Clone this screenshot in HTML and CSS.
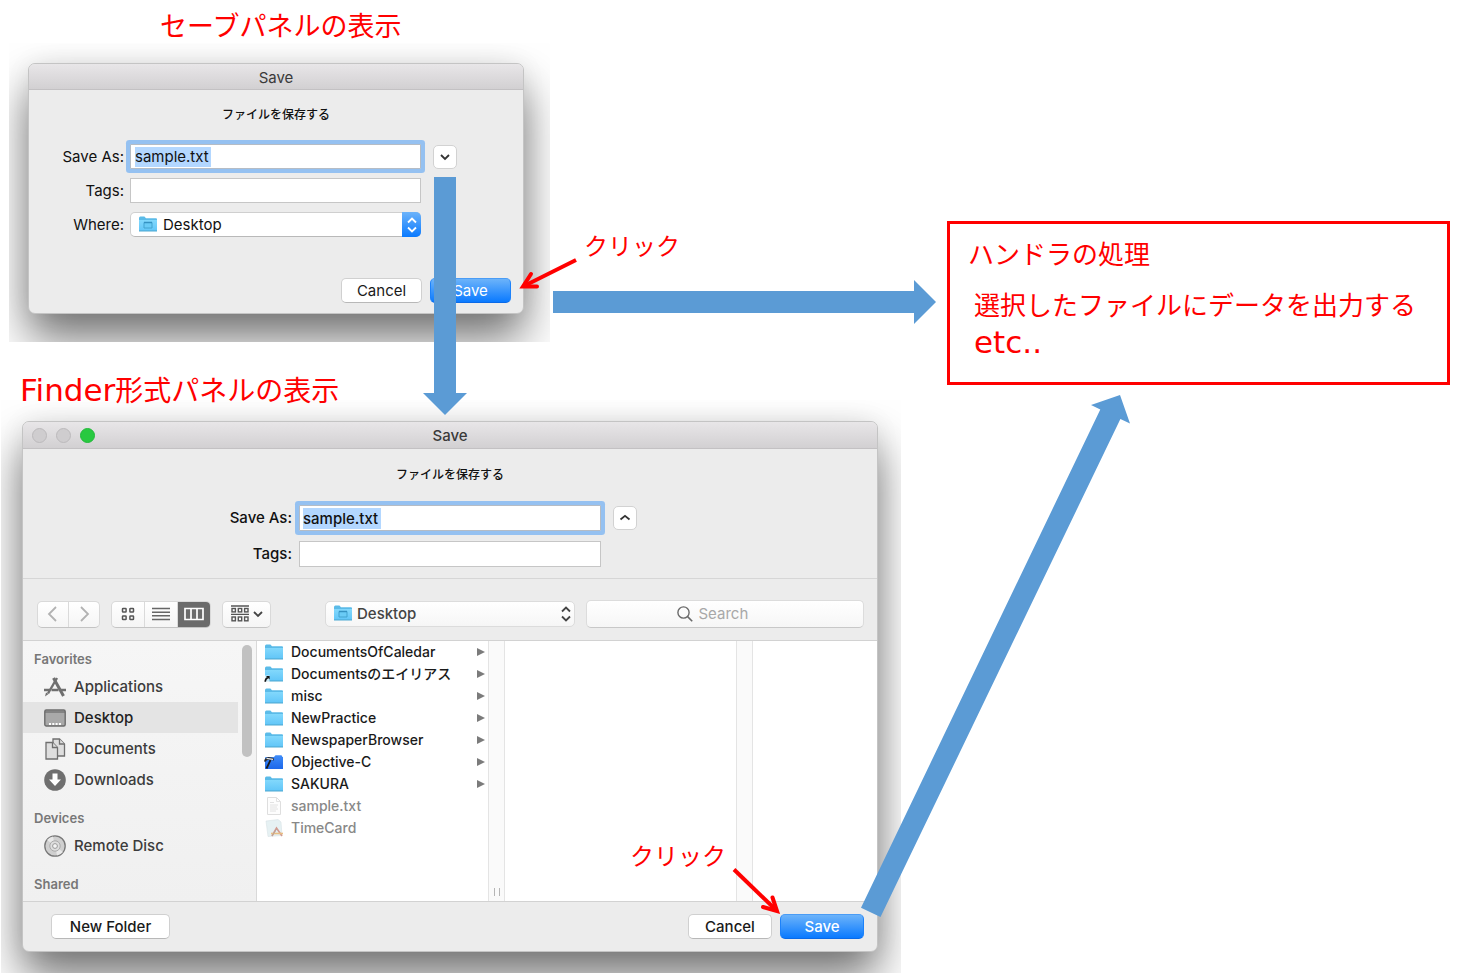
FILE: index.html
```html
<!DOCTYPE html>
<html lang="ja">
<head>
<meta charset="utf-8">
<title>セーブパネルの表示</title>
<link rel="stylesheet" href="styles.css">
</head>
<body>
<svg class="defs" aria-hidden="true">
  <defs>
    <linearGradient id="folderFill" x1="0" y1="0" x2="0" y2="1"><stop offset="0" stop-color="#82d8fc"/><stop offset="1" stop-color="#62c6f8"/></linearGradient>
    <linearGradient id="projFill" x1="0" y1="0" x2="0" y2="1"><stop offset="0" stop-color="#3f8cf8"/><stop offset="1" stop-color="#1d68ea"/></linearGradient>
    <symbol id="folder" viewBox="0 0 20 18"><path d="M1 3.2Q1 1.6 2.4 1.6H6.4L8 3.2H18Q19 3.2 19 4.4V16H1Z" fill="#5bbbe8"/><path d="M1 5H19V15.6H1Z" fill="url(#folderFill)"/><path d="M1 16H19" stroke="#4fa9d2" stroke-width="1"/></symbol>
    <symbol id="desk-folder" viewBox="0 0 20 18"><use href="#folder"/><path d="M6 7.500H14V13H6Z" fill="#6acbf6" stroke="#42a3d0"/><path d="M6 7.500H14" stroke="#3592c2" stroke-width="1.500"/></symbol>
    <symbol id="alias-folder" viewBox="0 0 20 18"><use href="#folder"/><path d="M0 10.500H5.500V17H0Z" fill="#fff" opacity=".7"/><path d="M1.200 16.800Q1.200 14 3.800 12.500" stroke="#111" stroke-width="1.600" fill="none"/><path d="M2 11H5.600V14.600Z" fill="#111"/></symbol>
    <symbol id="project" viewBox="0 0 20 18"><path d="M1 5Q1 4 2 4H10L11.500 2.200H17.500L18.500 4H19V16H1Z" fill="url(#projFill)"/><path d="M2.500 15.500L6.500 7" stroke="#1c1c1c" stroke-width="1.800"/><path d="M0 8.500Q.5 4.500 4.500 4L9.500 5L10 7.500L6.500 6.800Q2.500 6.300 1.500 8.800Z" fill="#2c2c2c"/><path d="M2.500 5.400L9 6.300" stroke="#e4e8ee" stroke-width="1.200"/></symbol>
    <symbol id="textfile" viewBox="0 0 20 18"><path d="M3.500.5H12.500L16.500 4.500V17.500H3.500Z" fill="#fdfdfd" stroke="#dedede"/><path d="M12.500.5V4.500H16.500M6 5.500H10M6 8H14M6 10H13M6 12H14M6 14H12" fill="none" stroke="#e2e2e2"/></symbol>
    <symbol id="appfile" viewBox="0 0 20 18"><path d="M2 2L14 .5L17 3L18 16.500L4 17.500Z" fill="#e6f1f3" stroke="#d9e3e5" stroke-width=".6"/><path d="M8 17L12.500 9L18 17" fill="none" stroke="#d39a90" stroke-width="1.600"/><path d="M7 14.500H19" stroke="#e8bd83" stroke-width="1.600"/><path d="M12.500 10L8 17" stroke="#b8a59b"/></symbol>
    <symbol id="updown" viewBox="0 0 12 18"><path d="M2 6.500L6 2.500L10 6.500M2 11.500L6 15.500L10 11.500" fill="none" stroke="currentColor" stroke-width="1.800"/></symbol>
    <symbol id="down" viewBox="0 0 12 12"><path d="M2 4L6 8L10 4" fill="none" stroke="currentColor" stroke-width="1.800"/></symbol>
    <symbol id="up" viewBox="0 0 12 12"><path d="M1.500 7.500L6 3.800L10.500 7.500" fill="none" stroke="currentColor" stroke-width="1.800"/></symbol>
  </defs>
</svg>

<main class="canvas">
  <h1 class="caption caption-sheet">セーブパネルの表示</h1>

  <section class="shot shot-sheet">
    <form class="window">
      <header class="titlebar">Save</header>
      <p class="message">ファイルを保存する</p>
      <div class="fields fields-sheet">
        <label for="name1">Save As:</label>
        <div class="field focused"><input id="name1" type="text" value="sample.txt"></div>
        <button class="toggle" type="button" aria-label="Expand"><svg><use href="#down"/></svg></button>
        <label for="tags1">Tags:</label>
        <div class="field"><input id="tags1" class="wide" type="text"></div>
        <span></span>
        <label for="where1">Where:</label>
        <div class="popup popup-blue">
          <select id="where1"><option>Desktop</option></select>
          <svg class="popup-icon"><use href="#desk-folder"/></svg>
          <span class="popup-cap"><svg><use href="#updown"/></svg></span>
        </div>
      </div>
      <footer class="sheet-actions">
        <button class="btn" type="button">Cancel</button>
        <button class="btn primary" type="button">Save</button>
      </footer>
    </form>
  </section>

  <h2 class="caption caption-finder"><span class="latin">Finder</span>形式パネルの表示</h2>

  <section class="shot shot-finder">
    <form class="window">
      <header class="titlebar"><span class="lights"><i></i><i></i><i class="green"></i></span>Save</header>
      <p class="message">ファイルを保存する</p>
      <div class="fields fields-finder">
        <label for="name2">Save As:</label>
        <div class="field focused"><input id="name2" type="text" value="sample.txt"></div>
        <button class="toggle" type="button" aria-label="Collapse"><svg><use href="#up"/></svg></button>
        <label for="tags2">Tags:</label>
        <div class="field"><input id="tags2" class="wide" type="text"></div>
      </div>

      <div class="toolbar">
        <div class="segments nav">
          <button type="button" aria-label="Back"><svg viewBox="0 0 16 16"><path d="M11 1L4 8L11 15" fill="none" stroke="#b2b2b2" stroke-width="1.800"/></svg></button>
          <button type="button" aria-label="Forward"><svg viewBox="0 0 16 16"><path d="M5 1L12 8L5 15" fill="none" stroke="#b2b2b2" stroke-width="1.800"/></svg></button>
        </div>
        <div class="segments views">
          <button type="button" aria-label="Icons"><svg viewBox="0 0 16 16"><g fill="none" stroke="#555" stroke-width="1.500"><rect x="2.500" y="2.500" width="3.600" height="3.600" rx=".6"/><rect x="9.900" y="2.500" width="3.600" height="3.600" rx=".6"/><rect x="2.500" y="9.900" width="3.600" height="3.600" rx=".6"/><rect x="9.900" y="9.900" width="3.600" height="3.600" rx=".6"/></g></svg></button>
          <button type="button" aria-label="List"><svg class="w18" viewBox="0 0 18 16"><path d="M0 2.500H18M0 6.200H18M0 9.800H18M0 13.500H18" stroke="#666" stroke-width="1.400"/></svg></button>
          <button type="button" class="on" aria-label="Columns"><svg class="w20" viewBox="0 0 20 16"><path d="M1 2.500H19V13.500H1ZM7 2.500V13.500M13 2.500V13.500" fill="none" stroke="#fff" stroke-width="1.700"/></svg></button>
        </div>
        <div class="segments group">
          <button type="button" aria-label="Arrange"><svg class="w20" viewBox="0 0 20 18"><path d="M1 1H19M1 9.300H19" stroke="#555" stroke-width="1.300"/><g fill="none" stroke="#555" stroke-width="1.400"><rect x="2" y="3.500" width="3.400" height="3.400"/><rect x="8.300" y="3.500" width="3.400" height="3.400"/><rect x="14.600" y="3.500" width="3.400" height="3.400"/><rect x="2" y="12" width="3.400" height="3.800"/><rect x="8.300" y="12" width="3.400" height="3.800"/><rect x="14.600" y="12" width="3.400" height="3.800"/></g></svg><svg class="w12"><use href="#down"/></svg></button>
        </div>
        <div class="popup popup-plain">
          <select aria-label="Location"><option>Desktop</option></select>
          <svg class="popup-icon"><use href="#desk-folder"/></svg>
          <span class="popup-cap"><svg><use href="#updown"/></svg></span>
        </div>
        <label class="search">
          <svg viewBox="0 0 16 16"><circle cx="6.500" cy="6.500" r="5.600" fill="none" stroke="#6a6a6a" stroke-width="1.400"/><path d="M10.600 10.600L15.200 15.200" stroke="#6a6a6a" stroke-width="1.600"/></svg>
          <input type="search" placeholder="Search" aria-label="Search">
        </label>
      </div>

      <div class="browser">
        <nav class="sidebar">
          <h3>Favorites</h3>
          <a href="#"><svg viewBox="0 0 22 22"><g fill="none" stroke="#6f6f6f"><path d="M13 2L4 17.500" stroke-width="2.400"/><path d="M9.500 2L19.500 20" stroke-width="3"/><path d="M0 14H22" stroke-width="2.600" stroke-dasharray="6 1.500 7 1.500 6"/></g><path d="M1 20.500L2 16.500L4.500 18Z" fill="#6f6f6f"/></svg>Applications</a>
          <a href="#" class="current"><svg viewBox="0 0 22 22"><rect x=".8" y="3" width="20.400" height="16" rx="1.500" fill="#a9a9a9" stroke="#6c6c6c" stroke-width="1.400"/><path d="M1 5H21" stroke="#6c6c6c" stroke-width="1.200"/><path d="M5 17H17" stroke="#fff" stroke-width="2" stroke-dasharray="2 1.300"/></svg>Desktop</a>
          <a href="#"><svg viewBox="0 0 22 22"><g fill="#dedede" stroke="#6f6f6f" stroke-width="1.300"><path d="M9 1H15.500L20.500 6V18H9Z"/><path d="M15.500 1V6H20.500"/><path d="M2 4.500H8.500L13.500 9.500V21H2Z"/><path d="M8.500 4.500V9.500H13.500"/></g></svg>Documents</a>
          <a href="#"><svg viewBox="0 0 22 22"><circle cx="11" cy="11" r="10.800" fill="#6f6f6f"/><path d="M8.500 4.500H13.500V10.500H17L11 17L5 10.500H8.500Z" fill="#fff"/></svg>Downloads</a>
          <h3>Devices</h3>
          <a href="#"><svg viewBox="0 0 22 22"><circle cx="11" cy="11" r="10.200" fill="#cfcfcf" stroke="#777" stroke-width="1.300"/><path d="M11 11L3 5A10 10 0 0 1 9 1.500ZM11 11L19 17A10 10 0 0 1 13 20.500Z" fill="#e8e8e8"/><circle cx="11" cy="11" r="5.200" fill="#dedede" stroke="#aaa"/><circle cx="11" cy="11" r="2.400" fill="#f5f5f5" stroke="#999"/></svg>Remote Disc</a>
          <h3>Shared</h3>
          <span class="scrollbar"></span>
        </nav>
        <ul class="files">
          <li class="dir"><svg><use href="#folder"/></svg>DocumentsOfCaledar</li>
          <li class="dir"><svg><use href="#alias-folder"/></svg>Documentsのエイリアス</li>
          <li class="dir"><svg><use href="#folder"/></svg>misc</li>
          <li class="dir"><svg><use href="#folder"/></svg>NewPractice</li>
          <li class="dir"><svg><use href="#folder"/></svg>NewspaperBrowser</li>
          <li class="dir"><svg><use href="#project"/></svg>Objective-C</li>
          <li class="dir"><svg><use href="#folder"/></svg>SAKURA</li>
          <li class="dim"><svg><use href="#textfile"/></svg>sample.txt</li>
          <li class="dim"><svg><use href="#appfile"/></svg>TimeCard</li>
        </ul>
        <div class="gutter grip"></div>
        <div class="column"></div>
        <div class="gutter"></div>
        <div></div>
      </div>

      <footer class="finder-actions">
        <button class="btn new-folder" type="button">New Folder</button>
        <button class="btn" type="button">Cancel</button>
        <button class="btn primary" type="button">Save</button>
      </footer>
    </form>
  </section>

  <section class="handler">
    <h2>ハンドラの処理</h2>
    <p>選択したファイルにデータを出力する<br><span class="latin">etc..</span></p>
  </section>

  <p class="click click-sheet">クリック</p>
  <p class="click click-finder">クリック</p>

  <svg class="arrows" viewBox="0 0 1464 973" aria-hidden="true">
    <g fill="#5b9bd5">
      <path d="M434 177H456V393H467L445 415L423 393H434Z"/>
      <path d="M553 291H914V280L936 302L914 324V313H553Z"/>
      <path d="M861 907.700L1100.300 409.500L1091 405L1120 395L1130 423.500L1120.400 419L880.500 917Z"/>
    </g>
    <g fill="none" stroke="#f00" stroke-width="4">
      <path d="M576 260L524 286"/><path d="M531 274L523 286.500L537 286.500" stroke-linecap="round"/>
      <path d="M734 869.500L776 910"/><path d="M772.500 897.500L777 911L763 907" stroke-linecap="round"/>
    </g>
  </svg>
</main>
</body>
</html>
```
FILE: styles.css
```css
* { box-sizing: border-box; }

body {
  margin: 0;
  background: #fff;
  color: #1a1a1a;
  font: 15px/20px Inter, "Noto Sans CJK JP", sans-serif;
}

h1, h2, h3, p, ul { margin: 0; padding: 0; font-weight: 400; }
button, input, select { font: inherit; color: inherit; margin: 0; }
svg { display: block; flex: none; }
.defs { position: absolute; width: 0; height: 0; }

.canvas { position: relative; min-height: 973px; overflow: hidden; }

/* Annotations */
.caption, .click, .handler {
  position: absolute;
  color: #f00;
  font-family: "Noto Sans CJK JP", sans-serif;
  white-space: nowrap;
}
.caption { line-height: 40px; }
.caption-sheet { left: 160px; top: 5px; font-size: 27px; }
.caption-finder { left: 20px; top: 369px; font-size: 28px; }
.latin { font-family: "DejaVu Sans", sans-serif; font-size: 31px; }
.click { font-size: 24px; line-height: 36px; }
.click-sheet { left: 584px; top: 227px; }
.click-finder { left: 630px; top: 837px; }
.handler {
  left: 947px;
  top: 221px;
  width: 503px;
  padding: 9px 18px 21px;
  border: 3px solid #f00;
  font-size: 26px;
}
.handler h2 { font-size: 26px; line-height: 40px; }
.handler p { padding: 12px 0 0 6px; line-height: 38px; }
.arrows { position: absolute; left: 0; top: 0; width: 1464px; height: 973px; pointer-events: none; }

/* Windows with their clipped shadows */
.shot { position: absolute; overflow: hidden; }
.shot-sheet { left: 9px; top: 43px; width: 541px; padding: 20px 26px 28px 19px; }
.shot-finder { left: 1px; top: 400px; width: 900px; padding: 21px 23px 22px 21px; font-weight: 500; }
.window {
  border: 1px solid #c4c4c4;
  border-radius: 7px;
  background: #ececec;
  box-shadow: 0 25px 46px rgba(0, 0, 0, .55), 0 0 26px rgba(0, 0, 0, .06);
}
.titlebar {
  position: relative;
  height: 26px;
  border-bottom: 1px solid #c3c1c3;
  border-radius: 6px 6px 0 0;
  background: linear-gradient(#e8e6e8, #d2d0d2);
  color: #3a3a3a;
  line-height: 27px;
  text-align: center;
}
.shot-finder .titlebar { height: 27px; line-height: 28px; }
.lights { position: absolute; left: 9px; top: 6px; display: flex; gap: 9px; }
.lights i { width: 15px; height: 15px; border: 1px solid #bcbabc; border-radius: 50%; background: #cfcdcf; }
.lights .green { border-color: #22b93a; background: #28c940; }
.message { padding-top: 16px; color: #111; font-size: 12px; font-weight: 500; line-height: 18px; text-align: center; }
.shot-finder .message { padding-top: 17px; }

/* Form fields */
.fields { display: grid; align-items: center; color: #111; }
.fields label { text-align: right; }
.fields-sheet { grid-template-columns: 95px 291px 30px; gap: 9px 6px; padding-top: 20px; }
.fields-finder {
  grid-template-columns: 269px 302px 29px;
  gap: 10px 7px;
  padding: 21px 0 11px;
  border-bottom: 1px solid #d6d6d6;
}
.field { display: flex; align-items: center; height: 25px; padding: 0 4px; border: 1px solid #c6c6c6; background: #fff; }
.fields-finder .field { height: 26px; padding: 0 3px; }
.focused { border-color: #b5bcc5; box-shadow: 0 0 0 4px #95c1f1; border-radius: 1px; }
.field input { width: 76px; height: 20px; padding: 0; border: 0; outline: 0; background: #b3d7ff; }
.fields-finder .field input { width: 78px; height: 21px; }
.field .wide, .fields-finder .field .wide { width: 100%; background: none; }
.toggle {
  justify-self: end;
  display: grid;
  place-items: center;
  width: 24px;
  height: 24px;
  padding: 0;
  border: 1px solid #d2d2d2;
  border-radius: 5px;
  background: #fff;
  color: #333;
}
.toggle svg { width: 12px; height: 12px; }

.popup { position: relative; height: 25px; }
.popup select {
  appearance: none;
  width: 100%;
  height: 100%;
  padding: 0 28px 0 32px;
  border: 1px solid #cfcfcf;
  border-bottom-color: #b9b9b9;
  border-radius: 5px;
  background: #fff;
}
.popup-icon { position: absolute; left: 8px; top: 3px; width: 20px; height: 18px; pointer-events: none; }
.popup-cap {
  position: absolute;
  inset: 0 0 0 auto;
  display: grid;
  place-items: center;
  width: 19px;
  border-radius: 0 5px 5px 0;
  pointer-events: none;
}
.popup-cap svg { width: 12px; height: 18px; }
.popup-blue .popup-cap { background: linear-gradient(#6cb3fa, #0a7aff); color: #fff; }
.popup-plain { width: 250px; height: 26px; margin-left: 43px; color: #444; }
.popup-plain select { padding-left: 31px; background: linear-gradient(#fff, #f6f6f6); border-color: #dcdcdc; }

.btn {
  min-width: 81px;
  height: 25px;
  padding: 0 12px;
  border: 1px solid #d0d0d0;
  border-bottom-color: #b8b8b8;
  border-radius: 5px;
  background: #fff;
  line-height: 22px;
}
.primary { border-color: #4a9cf5 #1d82fa #0a6ae8; background: linear-gradient(#6cb3fa, #0a7aff); color: #fff; }
.sheet-actions { display: flex; justify-content: flex-end; gap: 8px; padding: 41px 12px 10px; }

/* Toolbar */
.toolbar { display: flex; align-items: center; gap: 11px; height: 62px; padding: 9px 13px 0 14px; border-bottom: 1px solid #d2d2d2; }
.segments {
  display: flex;
  height: 27px;
  overflow: hidden;
  border: 1px solid #d9d9d9;
  border-bottom-color: #c4c4c4;
  border-radius: 5px;
  background: linear-gradient(#fff, #f5f5f5);
}
.segments button { display: flex; flex: 1; align-items: center; justify-content: center; padding: 0; border: 0; background: none; }
.segments button + button { border-left: 1px solid #dadada; }
.segments svg { width: 16px; height: 16px; }
.segments .w18 { width: 18px; }
.segments .w20 { width: 20px; }
.segments .w12 { width: 12px; height: 12px; }
.segments .on { background: #6b6b6b; }
.nav { width: 63px; }
.views { width: 100px; }
.group { width: 49px; color: #444; }
.group button { gap: 2px; }
.group .w20 { height: 18px; }
.search {
  display: flex;
  flex: 1;
  align-items: center;
  justify-content: center;
  gap: 6px;
  height: 28px;
  border: 1px solid #dcdcdc;
  border-bottom-color: #c8c8c8;
  border-radius: 5px;
  background: linear-gradient(#fff, #f6f6f6);
}
.search svg { width: 16px; height: 16px; }
.search input { appearance: none; width: 75px; padding: 0; border: 0; outline: 0; background: none; font-weight: 400; }
.search input::placeholder { color: #a8a8a8; opacity: 1; }

/* Column browser */
.browser { display: grid; grid-template-columns: 234px 231px 17px 231px 17px 1fr; height: 260px; background: #fff; }
.sidebar {
  position: relative;
  padding: 6px 18px 0 0;
  overflow: hidden;
  border-right: 1px solid #d9d9d9;
  background: linear-gradient(#f6f6f6, #f0f0f0);
  color: #3c3c3c;
}
.sidebar h3 { padding-left: 11px; color: #777; font-size: 13px; line-height: 24px; font-weight: 600; }
.sidebar a + h3 { margin-top: 11px; }
.sidebar a { display: flex; align-items: center; gap: 8px; height: 31px; padding-left: 21px; color: inherit; text-decoration: none; }
.sidebar a svg { width: 22px; height: 22px; }
.sidebar .current { background: #e4e4e4; color: #222; }
.scrollbar { position: absolute; right: 4px; top: 4px; width: 10px; height: 112px; border-radius: 5px; background: #c1c1c1; }
.files { list-style: none; font-size: 14px; font-weight: 500; }
.files li { display: flex; align-items: center; gap: 7px; height: 22px; padding: 0 3px 0 7px; }
.files svg { width: 20px; height: 18px; }
.dir::after {
  content: "";
  margin-left: auto;
  border: solid transparent;
  border-width: 4px 0 4px 8px;
  border-left-color: #7b7b7b;
}
.files .dim { color: #888; }
.gutter { border: solid #e4e4e4; border-width: 0 1px; background: #fafafa; }
.grip { display: flex; align-items: flex-end; justify-content: center; padding-bottom: 5px; }
.grip::after { content: ""; width: 4px; height: 8px; border: solid #b5b5b5; border-width: 0 1px; }
.finder-actions { display: flex; gap: 8px; padding: 12px 13px 12px 28px; border-top: 1px solid #d2d2d2; }
.finder-actions .btn { min-width: 84px; }
.finder-actions .new-folder { min-width: 119px; margin-right: auto; }
```
